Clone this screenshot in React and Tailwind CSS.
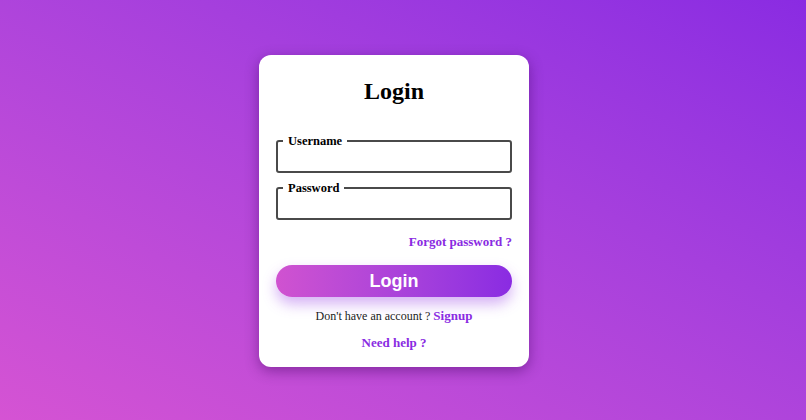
export default function App() {
  return (
    <div
      className="w-full h-[420px] flex items-center justify-center pr-[18px] pt-[2px] bg-linear-to-tr from-[#d553d3] to-[#8a2be2]"
      style={{ fontFamily: '"Liberation Serif", "Times New Roman", serif' }}
    >
      <div className="w-[270px] h-[312px] bg-white rounded-xl shadow-[0_4px_14px_rgba(60,0,90,0.45)] px-[17px] pt-[21px] flex flex-col">
        <h2 className="text-center font-bold text-[24px] leading-[30px] text-black">Login</h2>
        <fieldset className="mt-[29px] border-2 border-[#4a4a4a] rounded-[3px] h-[38px] px-[5px]">
          <legend className="px-[5px] font-bold text-[12.5px] leading-[12px] text-black">Username</legend>
        </fieldset>
        <fieldset className="mt-[9px] border-2 border-[#4a4a4a] rounded-[3px] h-[38px] px-[5px]">
          <legend className="px-[5px] font-bold text-[12.5px] leading-[12px] text-black">Password</legend>
        </fieldset>
        <div className="mt-[14px] text-right font-bold text-[13px] leading-[16px] text-[#8a2be2]">Forgot password ?</div>
        <button
          className="mt-[15px] h-[32px] w-full rounded-full bg-linear-to-r from-[#d052d0] to-[#8a2be2] text-white font-bold text-[18px] shadow-[0_7px_14px_rgba(150,60,230,0.4)]"
          style={{ fontFamily: '"Liberation Sans", Arial, sans-serif' }}
        >
          Login
        </button>
        <div className="mt-[11px] text-center text-[12px] leading-[16px] text-[#222]">
          Don't have an account ? <span className="font-bold text-[#8a2be2] text-[13px]">Signup</span>
        </div>
        <div className="mt-[11px] text-center font-bold text-[13px] leading-[16px] text-[#8a2be2]">Need help ?</div>
      </div>
    </div>
  );
}
